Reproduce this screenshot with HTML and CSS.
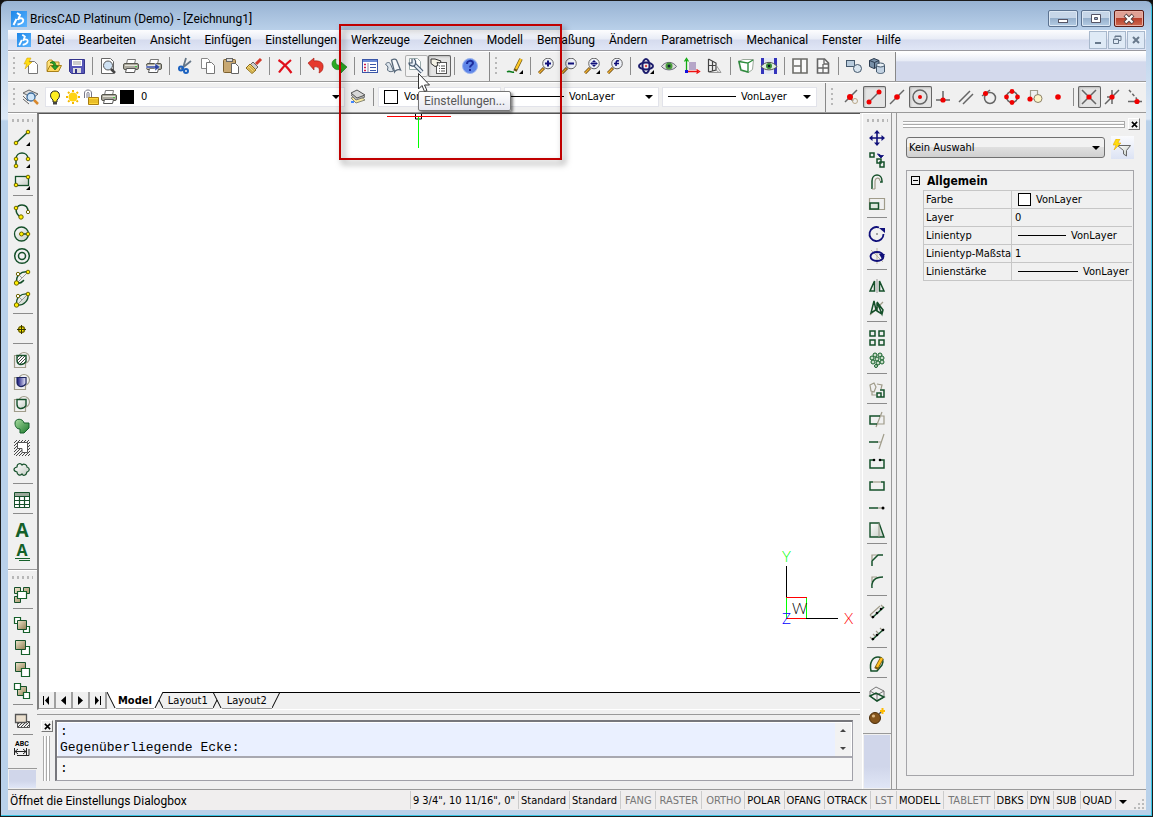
FILE: index.html
```html
<!DOCTYPE html>
<html lang="de">
<head>
    <meta charset="UTF-8">
    <meta name="viewport" content="width=device-width, initial-scale=1.0">
    <title>BricsCAD Platinum (Demo) - [Zeichnung1]</title>
    <link rel="stylesheet" href="styles.css">
</head>
<body>
    <!-- shared icon parts -->
    <svg class="defs" width="0" height="0">
        <defs>
            <linearGradient id="beige" x2="1" y2="1"><stop offset="0" stop-color="#efe6cc"/><stop offset="1" stop-color="#8d7c50"/></linearGradient>
            <linearGradient id="pale" x2="1" y2="1"><stop offset="0" stop-color="#fff"/><stop offset="1" stop-color="#c4ccc4"/></linearGradient>
            <linearGradient id="leaf" x2="1" y2="1"><stop offset="0" stop-color="#a8dca0"/><stop offset="1" stop-color="#1c7a2c"/></linearGradient>
            <linearGradient id="navy" x2="1"><stop offset="0" stop-color="#10107a"/><stop offset="1" stop-color="#f0f0ff"/></linearGradient>
            <linearGradient id="brand" x2="1" y2="1"><stop offset="0" stop-color="#1c86e8"/><stop offset="1" stop-color="#5cb4ff"/></linearGradient>
            <pattern id="hatch" width="3" height="3" patternUnits="userSpaceOnUse"><path d="M0 3L3 0" stroke="#333" stroke-width=".9"/></pattern>
        </defs>
        <symbol id="logo" viewBox="0 0 16 16">
            <rect width="16" height="16" fill="url(#brand)"/>
            <path d="M6 2l3 2-2 5M2.500 14l3-6M8 7.500c3-1 5 .5 4 3-.8 2-2.500 2.500-5.500 3" fill="none" stroke="#fff" stroke-width="2"/>
        </symbol>
        <symbol id="printer" viewBox="0 0 16 16">
            <path d="M3.500 6L4.500 1.500h8L11.500 6" fill="#fff" stroke="#777"/>
            <rect x=".5" y="5.500" width="15" height="6" rx="1.500" fill="#aaa89c" stroke="#55554c"/>
            <path d="M2 7.500h12" stroke="#e4e2d8"/>
            <path d="M3.500 10.500h9l-1 4h-9z" fill="#fff" stroke="#555"/>
            <rect x="12" y="8" width="2" height="1" fill="#4c4"/>
        </symbol>
        <symbol id="lens" viewBox="0 0 16 16">
            <path d="M1 15l5-5" stroke="#6c4a10" stroke-width="3"/>
            <path d="M1 15l4.500-4.500" stroke="#f0b030" stroke-width="1.500"/>
            <circle cx="10" cy="5.500" r="5.300" fill="#eef1f8" stroke="#666"/>
        </symbol>
        <symbol id="flyout" viewBox="0 0 16 16"><path d="M16 12v4h-4z" fill="#000"/></symbol>
        <symbol id="arrow" viewBox="0 0 8 4"><path d="M0 0h8L4 4z" fill="#000"/></symbol>
        <symbol id="cross" viewBox="0 0 8 8"><path d="M1 1l6 6M7 1L1 7" stroke="#000" stroke-width="1.800"/></symbol>
    </svg>

    <div class="window">
        <header class="titlebar">
            <svg class="app-logo" width="16" height="16"><use href="#logo"/></svg>
            <h1>BricsCAD Platinum (Demo) - [Zeichnung1]</h1>
            <div class="window-buttons">
                <button aria-label="Minimieren"><svg width="12" height="12" viewBox="0 0 12 12"><rect x="1.500" y="6.500" width="9" height="3" fill="#fff" stroke="#556"/></svg></button>
                <button aria-label="Maximieren"><svg width="12" height="12" viewBox="0 0 12 12"><path d="M1.500 1.500h9v8h-9zM4.500 4.500v2h3v-2z" fill="#fff" fill-rule="evenodd" stroke="#556"/></svg></button>
                <button class="close" aria-label="Schließen"><svg width="12" height="12" viewBox="0 0 12 12"><path d="M2 2l8 8M10 2l-8 8" stroke="#544" stroke-width="4"/><path d="M2.500 2.500l7 7M9.500 2.500l-7 7" stroke="#fff" stroke-width="2.200"/></svg></button>
            </div>
        </header>

        <nav class="menubar">
            <svg class="doc-logo" width="14" height="16"><use href="#logo"/></svg>
            <button>Datei</button>
            <button>Bearbeiten</button>
            <button>Ansicht</button>
            <button>Einfügen</button>
            <button>Einstellungen</button>
            <button>Werkzeuge</button>
            <button>Zeichnen</button>
            <button>Modell</button>
            <button>Bemaßung</button>
            <button>Ändern</button>
            <button>Parametrisch</button>
            <button>Mechanical</button>
            <button>Fenster</button>
            <button>Hilfe</button>
            <div class="doc-buttons">
                <button aria-label="Zeichnung minimieren"><svg width="10" height="10" viewBox="0 0 10 10"><path d="M2 8h6" stroke="#68798c" stroke-width="2"/></svg></button>
                <button aria-label="Zeichnung wiederherstellen"><svg width="10" height="10" viewBox="0 0 10 10"><path d="M3 3V1h6v4.500H7M3 1.500h6M1.500 4h5v4.500h-5zM1.500 4.500h5" fill="none" stroke="#68798c"/></svg></button>
                <button aria-label="Zeichnung schließen"><svg width="10" height="10" viewBox="0 0 10 10"><path d="M2 2l6 6M8 2L2 8" stroke="#68798c" stroke-width="2"/></svg></button>
            </div>
        </nav>

        <div class="toolbar-row">
            <div class="band">
                <span class="grip"></span>
                <button class="tool" aria-label="Neu"><svg viewBox="0 0 16 16"><path d="M5.500 3.500h6l3 3v9h-9z" fill="#fff" stroke="#777"/><path d="M4 0h4L6 4h3L2 11l1.500-5H1z" fill="#fd1" stroke="#c90" stroke-width=".5"/></svg></button>
                <button class="tool" aria-label="Öffnen"><svg viewBox="0 0 16 16"><path d="M1 13V4l2-2h3l1 2h6v3" fill="#ffe27a" stroke="#b8902a"/><path d="M1 13.500L4 7.500h11.500l-3 6z" fill="#ffd75e" stroke="#a8801a"/><path d="M4 5c3-3 6-1 6 3h2.500L9 12 5.500 8H8C8 6 6 4.500 4 5z" fill="#2aa02a" stroke="#0a600a" stroke-width=".6"/></svg></button>
                <button class="tool" aria-label="Speichern"><svg viewBox="0 0 16 16"><path d="M.5 1.500h15v14h-13l-2-2z" fill="#5757b8" stroke="#34348c"/><path d="M3 2h10v6H3z" fill="#fff"/><path d="M4 4h8M4 6h8" stroke="#999"/><path d="M4 10h8v5H4z" fill="#ddd"/><path d="M6 11h2v4H6z" fill="#34348c"/></svg></button>
                <span class="sep"></span>
                <button class="tool" aria-label="Druckvorschau"><svg viewBox="0 0 16 16"><path d="M1.500.5h9l3 3v12h-12z" fill="#fff" stroke="#666"/><circle cx="8" cy="7.500" r="4.500" fill="#cfe2f4" stroke="#555"/><path d="M11 11l4 4" stroke="#444" stroke-width="2.500"/></svg></button>
                <button class="tool" aria-label="Drucken"><svg><use href="#printer"/></svg></button>
                <button class="tool" aria-label="Publizieren"><svg viewBox="0 0 16 16"><use href="#printer"/><path d="M0 8h9V5l5 4-5 4v-3H0z" fill="#2c44a4" stroke="#fff" stroke-width=".5"/></svg></button>
                <span class="sep"></span>
                <button class="tool" aria-label="Ausschneiden"><svg viewBox="0 0 16 16"><path d="M9 0L6 10M14 3L4 11" stroke="#678" stroke-width="1.800"/><g fill="none" stroke="#1c62c0" stroke-width="2"><circle cx="4" cy="10.500" r="2"/><circle cx="9" cy="13" r="2"/></g></svg></button>
                <button class="tool" aria-label="Kopieren"><svg viewBox="0 0 16 16"><path d="M1.500.5h6l2 2v8h-8z" fill="#fff" stroke="#888"/><path d="M6.500 4.500h5l3 3v8h-8z" fill="#fff" stroke="#777"/></svg></button>
                <button class="tool" aria-label="Einfügen"><svg viewBox="0 0 16 16"><rect x=".5" y="1.500" width="12" height="13" rx="1" fill="#c8a872" stroke="#7c602e"/><rect x="3.500" y=".5" width="6" height="3" fill="#ddd" stroke="#666"/><path d="M8.500 5.500h4l3 3v7h-7z" fill="#fff" stroke="#666"/></svg></button>
                <button class="tool" aria-label="Eigenschaften übertragen"><svg viewBox="0 0 16 16"><path d="M15 1l-5 5" stroke="#d23a2a" stroke-width="3"/><path d="M7 4l5 5-3 3-5-5z" fill="#ccc" stroke="#666"/><path d="M4 6l6 6-4 3.500L0 10z" fill="#f6d66e" stroke="#8a6a1a"/><path d="M2 9.500l5 5M3.500 8l5 5" stroke="#8a6a1a" stroke-width=".7"/></svg></button>
                <span class="sep"></span>
                <button class="tool" aria-label="Löschen"><svg viewBox="0 0 16 16"><path d="M1.500 2C6 5 11 10 14.500 15M14 2C9 6 5 10 2 14.500" fill="none" stroke="#e0101c" stroke-width="2.200"/></svg></button>
                <span class="sep"></span>
                <button class="tool" aria-label="Rückgängig"><svg viewBox="0 0 16 16"><path d="M0 5l6-5v3c6-1 10 2 9 7-.5 3-2 4-4 5 1-4 0-7-5-6v3z" fill="#e63a2e" stroke="#a01810" stroke-width=".6"/></svg></button>
                <button class="tool" aria-label="Wiederherstellen"><svg viewBox="0 0 16 16"><path d="M5 1C1 2 0 6 2 9c2 3 5 3 8 2v4l6-6-6-5v3C6 8 4 6 5 1z" fill="#2cac24" stroke="#0c7010" stroke-width=".6"/></svg></button>
                <span class="sep"></span>
                <button class="tool" aria-label="Eigenschaften"><svg viewBox="0 0 16 16"><rect x=".5" y="1.500" width="15" height="13" fill="#fff" stroke="#3a56a8"/><path d="M1 3h14" stroke="#6c8cd8" stroke-width="2"/><path d="M2 6.500h2M2 9.500h2M2 12.500h2" stroke="#d02050" stroke-width="1.500"/><path d="M6 5v9" stroke="#88a"/><path d="M8 6.500h6M8 9.500h6M8 12.500h6" stroke="#3a56a8"/></svg></button>
                <button class="tool" aria-label="Zeichnungsexplorer"><svg viewBox="0 0 16 16"><path d="M.5 6c2-2 4-2 5 0l3 7c-2 1-5 1-6-1L3 9z" fill="#dde5ec" stroke="#57687a"/><path d="M6.500 2c2-1 4-1 5 0l4 10c-2-1-5 0-6 2z" fill="#f6f8fa" stroke="#57687a" stroke-width="1.300"/></svg></button>
                <button class="tool hover" aria-label="Einstellungen"><svg viewBox="0 0 16 16"><path d="M1.500.5h8l3 3v8h-11z" fill="#fff" stroke="#9aa"/><path d="M6 6l8 8" stroke="#46586e" stroke-width="4"/><path d="M5 5l9 9" stroke="#e6edf6" stroke-width="2"/><path d="M4 1v4H1c0 3 5 4 6 2s1-5-1-6" fill="#e6edf6" stroke="#46586e" stroke-width="1.200"/></svg></button>
                <button class="tool pressed" aria-label="Eigenschaftsleiste"><svg viewBox="0 0 16 16"><rect x="5.500" y="4.500" width="10" height="11" fill="#fff" stroke="#555"/><path d="M8 8h1M8 10.500h1M8 13h1M10 8h4M10 10.500h4M10 13h4" stroke="#555"/><path d="M0 1h4l6 2-1 2-3-.5 1 3-3 1-4-3z" fill="#f4f2e6" stroke="#333"/></svg></button>
                <span class="sep"></span>
                <button class="tool" aria-label="Hilfe"><svg viewBox="0 0 16 16"><circle cx="8" cy="8" r="7.500" fill="#5f86e8" stroke="#9db6ee"/><path d="M5 6c0-4 6-4 6-1 0 2-3 2-3 4.500M8 11v2" fill="none" stroke="#1c2c9c" stroke-width="2"/></svg></button>
            </div>
            <div class="band">
                <span class="grip"></span>
                <button class="tool" aria-label="Skizze"><svg viewBox="0 0 16 16"><path d="M0 14c3-2 4 1 7 0" fill="none" stroke="#0a7a1a" stroke-width="1.500"/><path d="M14 1L8 13" stroke="#6b5414" stroke-width="3.600"/><path d="M14 1L9 11" stroke="#ffc928" stroke-width="2.200"/><use href="#flyout"/></svg></button>
                <span class="sep"></span>
                <button class="tool" aria-label="Vergrößern"><svg viewBox="0 0 16 16"><use href="#lens"/><path d="M7 5.500h6M10 2.500v6" stroke="#10107a" stroke-width="2"/></svg></button>
                <button class="tool" aria-label="Verkleinern"><svg viewBox="0 0 16 16"><use href="#lens"/><path d="M7 5.500h6" stroke="#10107a" stroke-width="2"/></svg></button>
                <button class="tool" aria-label="Zoom Grenzen"><svg viewBox="0 0 16 16"><use href="#lens"/><path d="M6.500 5.500h7M10 2v7M8.500 3.500h3M8.500 7.500h3M8 4v3M12 4v3" stroke="#10107a"/><use href="#flyout"/></svg></button>
                <button class="tool" aria-label="Zoom Vorher"><svg viewBox="0 0 16 16"><use href="#lens"/><path d="M12 3c-3-1-3 1-3 5M7 5.500h5" fill="none" stroke="#10107a" stroke-width="1.600"/></svg></button>
                <span class="sep"></span>
                <button class="tool" aria-label="Orbit"><svg viewBox="0 0 16 16"><g fill="none" stroke="#1c1c6c" stroke-width="2"><ellipse cx="8" cy="8" rx="7" ry="3.500"/><ellipse cx="8" cy="8" rx="3.500" ry="7"/></g><circle cx="8" cy="8" r="1.200" fill="#d44"/><use href="#flyout"/></svg></button>
                <button class="tool" aria-label="Ansicht"><svg viewBox="0 0 16 16"><path d="M.5 8.500C4 3 12 3 15.500 8.500 12 13 4 13 .5 8.500z" fill="#ddd" stroke="#667"/><circle cx="8" cy="8" r="3.500" fill="#4a9c3c"/><circle cx="8" cy="8" r="1.500" fill="#123"/></svg></button>
                <button class="tool" aria-label="BKS"><svg viewBox="0 0 16 16"><path d="M5 4h7v8H5z" fill="#b6a6c8"/><path d="M2.500 13V2M.5 3.500l2-3 2 3" fill="none" stroke="#1a1" stroke-width="1.300"/><path d="M3 13.500h11M12.500 11.500l3 2-3 2" fill="none" stroke="#e11" stroke-width="1.300"/><path d="M1 12h3v3H1z" fill="#11d"/></svg></button>
                <button class="tool" aria-label="Perspektive"><svg viewBox="0 0 16 16"><path d="M1.500 1v13M1.500 1L9 5v7l-7.500 2M5.500 3v10M1.500 7.500H9" fill="none" stroke="#444" stroke-width="1.200"/><path d="M9 7l5 7.500H2M9 12l3 2.500" fill="none" stroke="#999"/></svg></button>
                <span class="sep"></span>
                <button class="tool" aria-label="Ansichtsfläche"><svg viewBox="0 0 16 16"><path d="M.5 3.500L5 1.500h10.500l-1 10-4 3-8-2z" fill="#fff" stroke="#9aa89a"/><path d="M1 3.500l9 1.500v9l-7-2zM10 5l5-3" fill="none" stroke="#2c8c3c" stroke-width="1.400"/></svg></button>
                <button class="tool" aria-label="Rendern"><svg viewBox="0 0 16 16"><path d="M0 0h16v16H0z" fill="#3434bc"/><path d="M3 0h10v16H3z" fill="#e4e8f4"/><path d="M0 8.500C4 3 12 3 16 8.500 12 13 4 13 0 8.500z" fill="#ded" stroke="#555"/><circle cx="8" cy="8" r="3" fill="#3a8c34"/><circle cx="8" cy="8" r="1.200" fill="#012"/></svg></button>
                <span class="sep"></span>
                <button class="tool" aria-label="Ansichtsfenster"><svg viewBox="0 0 16 16"><path d="M1 1h14v14H1zM9 1v14M2 8h7" fill="#fafafa" stroke="#6c6c68" stroke-width="1.600"/></svg></button>
                <button class="tool" aria-label="Layout"><svg viewBox="0 0 16 16"><path d="M2.500 1h7l4 4v10h-11z" fill="#fafafa" stroke="#666" stroke-width="1.600"/><path d="M9 1v5h4M3 10h10M8 6v9" fill="none" stroke="#666" stroke-width="1.300"/></svg></button>
                <span class="sep"></span>
                <button class="tool" aria-label="2D-Objekte"><svg viewBox="0 0 16 16"><rect x=".5" y="2.500" width="8" height="6" fill="#b8cbdc" stroke="#44586c"/><circle cx="11.500" cy="10.500" r="4" fill="#d8e4ee" stroke="#44586c"/></svg></button>
                <button class="tool" aria-label="3D-Objekte"><svg viewBox="0 0 16 16"><path d="M.5 2.500L5 .5l5 2v6l-5 2-4.500-2z" fill="#7890a8" stroke="#2c3c50"/><path d="M.5 2.500l5 2 4.500-2M5.500 4.500v6" fill="none" stroke="#2c3c50"/><path d="M7.500 7v7c2 2 6 2 8 0V7" fill="#c2d2e2" stroke="#44586c"/><ellipse cx="11.500" cy="7" rx="4" ry="2" fill="#e8f0f6" stroke="#44586c"/></svg></button>
            </div>
        </div>

        <div class="toolbar-row layers">
            <div class="band">
                <span class="grip"></span>
                <button class="tool" aria-label="Layer-Explorer"><svg viewBox="0 0 16 16"><path d="M0 4l6-3 9 4-5 4zM0 7l5 5M0 10l6 5" fill="#ddd" stroke="#666"/><circle cx="8" cy="8" r="4" fill="#cfe6fa" stroke="#3c6c9c" stroke-width="1.300"/><path d="M11 11l4 4" stroke="#d8882c" stroke-width="2.500"/></svg></button>
                <div class="combo layer">
                    <svg viewBox="0 0 16 16"><path d="M6 11C2 8 3 2 8 2s6 6 2 9v2H6z" fill="#ffee20" stroke="#222"/><path d="M6 13h4v2.500H6z" fill="#444"/></svg>
                    <svg viewBox="0 0 16 16"><path d="M8 1v14M1 8h14M3 3l10 10M13 3L3 13" stroke="#f4b800" stroke-width="2" stroke-dasharray="2 1"/><circle cx="8" cy="8" r="4.500" fill="#ffd414"/></svg>
                    <svg viewBox="0 0 16 16"><path d="M1.500 9V4c0-4 7-4 7 0v5M4 9V4.500c0-1.500 2-1.500 2 0V8" fill="none" stroke="#778"/><path d="M5.500 8.500h10v7h-10z" fill="#ffd83a" stroke="#a87c10"/><path d="M6 11h9M6 13h9" stroke="#d4a418"/></svg>
                    <svg><use href="#printer"/></svg>
                    <span class="swatch black"></span>
                    <select aria-label="Layer"><option>0</option></select>
                    <svg class="drop"><use href="#arrow"/></svg>
                </div>
                <button class="tool" aria-label="Layerstatus"><svg viewBox="0 0 16 16"><path d="M1 9l5 5 9-3-5-4z" fill="#f8e8a0" stroke="#887"/><path d="M1 6l5 5 9-3-5-5z" fill="#bbb" stroke="#777"/><path d="M1 4l6-3 8 5-8 3z" fill="#d8d8d8" stroke="#555"/><path d="M1 13h3" stroke="#48f" stroke-width="2"/></svg></button>
                <span class="sep"></span>
                <div class="combo color">
                    <span class="swatch"></span>
                    <select aria-label="Farbe"><option>VonLayer</option></select>
                    <svg class="drop"><use href="#arrow"/></svg>
                </div>
                <div class="combo linetype">
                    <span class="sample"></span>
                    <select aria-label="Linientyp"><option>VonLayer</option></select>
                    <svg class="drop"><use href="#arrow"/></svg>
                </div>
                <div class="combo linetype">
                    <span class="sample long"></span>
                    <select aria-label="Linienstärke"><option>VonLayer</option></select>
                    <svg class="drop"><use href="#arrow"/></svg>
                </div>
            </div>
            <div class="band snaps">
                <span class="grip"></span>
                <button class="tool" aria-label="Nächster Punkt"><svg viewBox="0 0 16 16"><path class="k" d="M2 13L14 1M5 7l5 5"/><circle cx="12" cy="12" r="2.500" fill="none" stroke="#b8a888"/><circle class="dot" cx="7" cy="8" r="3"/></svg></button>
                <button class="tool pressed" aria-label="Endpunkt"><svg viewBox="0 0 16 16"><path class="k" d="M3 13L13 3"/><circle class="dot" cx="3" cy="13" r="2.500"/><circle class="dot" cx="13" cy="3" r="2.500"/></svg></button>
                <button class="tool" aria-label="Mittelpunkt"><svg viewBox="0 0 16 16"><path class="k" d="M1 15L15 1"/><circle class="dot" cx="8" cy="8" r="2.800"/></svg></button>
                <button class="tool pressed" aria-label="Zentrum"><svg viewBox="0 0 16 16"><circle class="k" cx="8" cy="8" r="7"/><circle class="dot" cx="8" cy="8" r="2"/></svg></button>
                <button class="tool" aria-label="Lotrecht"><svg viewBox="0 0 16 16"><path class="k" d="M1 11h14M8 2v9"/><circle class="dot" cx="8" cy="11" r="2.600"/></svg></button>
                <button class="tool" aria-label="Parallel"><svg viewBox="0 0 16 16"><path class="k" d="M1 13L12 2M5 15L15 5"/></svg></button>
                <button class="tool" aria-label="Tangente"><svg viewBox="0 0 16 16"><circle class="k" cx="9" cy="9" r="5.500"/><path class="k" d="M1 7l8-6"/><circle class="dot" cx="4.500" cy="4.500" r="2.500"/></svg></button>
                <button class="tool" aria-label="Quadrant"><svg viewBox="0 0 16 16"><circle class="k" cx="8" cy="8" r="5.500"/><circle class="dot" cx="8" cy="2.500" r="2.400"/><circle class="dot" cx="2.500" cy="8" r="2.400"/><circle class="dot" cx="13.500" cy="8" r="2.400"/><circle class="dot" cx="8" cy="13.500" r="2.400"/></svg></button>
                <button class="tool" aria-label="Basispunkt"><svg viewBox="0 0 16 16"><path class="s" d="M3.500 10V1.500h7V10z"/><circle cx="11" cy="9.500" r="4" fill="#fdf5c8" stroke="#8a8068"/><circle class="dot" cx="3" cy="10" r="2.600"/></svg></button>
                <button class="tool" aria-label="Punkt"><svg viewBox="0 0 16 16"><circle class="dot" cx="8" cy="8" r="2.800"/></svg></button>
                <span class="sep"></span>
                <button class="tool pressed" aria-label="Schnittpunkt"><svg viewBox="0 0 16 16"><path class="k" d="M1 1l14 14M15 1L1 15"/><circle class="dot" cx="8" cy="8" r="2.600"/></svg></button>
                <button class="tool" aria-label="Scheinbarer Schnittpunkt"><svg viewBox="0 0 16 16"><path class="k" d="M1 15L15 1M8 1v14M3 8h7"/><circle class="dot" cx="8" cy="8" r="2.600"/></svg></button>
                <button class="tool" aria-label="Verlängerung"><svg viewBox="0 0 16 16"><path class="k" d="M1 12.500h14"/><path class="k" d="M2 1l8 9" stroke-dasharray="3 2"/><circle class="dot" cx="10" cy="12.500" r="2.600"/></svg></button>
            </div>
        </div>

        <main class="workspace">
            <aside class="side left">
                <div class="dock">
                    <span class="grip"></span>
                    <button class="tool" aria-label="Linie"><svg viewBox="0 0 16 16"><path class="g" d="M2 13L14 2"/><circle class="node" cx="2" cy="13" r="1.800"/><circle class="node" cx="14" cy="2" r="1.800"/><use href="#flyout"/></svg></button>
                    <button class="tool" aria-label="Polylinie"><svg viewBox="0 0 16 16"><path class="g" d="M2 14V7c0-8 12-8 12 0"/><circle class="node" cx="2" cy="14" r="1.800"/><circle class="node" cx="2" cy="7" r="1.800"/><circle class="node" cx="14" cy="7" r="1.800"/><use href="#flyout"/></svg></button>
                    <button class="tool" aria-label="Rechteck"><svg viewBox="0 0 16 16"><rect x="1.500" y="2.500" width="13" height="9" fill="url(#pale)" stroke="#15502a" stroke-width="1.300"/><circle class="node" cx="2" cy="11" r="1.800"/><circle class="node" cx="14" cy="3" r="1.800"/><use href="#flyout"/></svg></button>
                    <span class="sep"></span>
                    <button class="tool" aria-label="Bogen"><svg viewBox="0 0 16 16"><path class="g" d="M6 13C-1 7 3 1 8 1c4 0 6 3 6 7"/><circle class="node" cx="2" cy="4" r="1.800"/><circle class="node" cx="7" cy="13" r="2.200"/><circle class="node empty" cx="14" cy="8" r="1.700"/></svg></button>
                    <button class="tool" aria-label="Kreis"><svg viewBox="0 0 16 16"><circle cx="7.500" cy="8" r="7" fill="url(#pale)" stroke="#15502a" stroke-width="1.300"/><path class="g" d="M8 8h6"/><circle class="node" cx="7.500" cy="8" r="2"/><circle class="node" cx="14" cy="8" r="1.800"/></svg></button>
                    <button class="tool" aria-label="Ring"><svg viewBox="0 0 16 16"><circle class="g" cx="8" cy="8" r="7.300"/><circle class="g" cx="8" cy="8" r="3.500"/></svg></button>
                    <button class="tool" aria-label="Elliptischer Bogen"><svg viewBox="0 0 16 16"><path class="g" d="M3 13C1 6 7 1 14 2M3 13c4 1 5-1 7-3"/><path d="M4 4l4 4M3 13L14 2" stroke="#999"/><circle class="node" cx="2.500" cy="13" r="2.200"/><circle class="node" cx="14" cy="2" r="1.800"/><circle class="node empty" cx="4" cy="4" r="1.700"/></svg></button>
                    <button class="tool" aria-label="Ellipse"><svg viewBox="0 0 16 16"><path d="M3 13C1 6 7 1 14 2c1 6-4 12-11 11z" fill="url(#pale)" stroke="#15502a" stroke-width="1.300"/><path d="M4 4l4 4M3 13L14 2" stroke="#999"/><circle class="node" cx="2.500" cy="13" r="2.200"/><circle class="node" cx="14" cy="2" r="1.800"/><circle class="node empty" cx="4" cy="4" r="1.700"/></svg></button>
                    <span class="sep"></span>
                    <button class="tool" aria-label="Punkt"><svg viewBox="0 0 16 16"><circle cx="7.500" cy="7.500" r="3" fill="#ffee00" stroke="#776c00" stroke-width="1.500"/><path d="M7.500 3v9M3 7.500h9" stroke="#363600"/></svg></button>
                    <span class="sep"></span>
                    <button class="tool" aria-label="Schraffur"><svg viewBox="0 0 16 16"><path class="s" d="M.5 3.500h11v12H.5z"/><circle class="s" cx="10" cy="6" r="5.500"/><path d="M3 3.500h9v6q-2 3.500-6 3-3-1-3-4z" fill="#fff"/><path d="M3 3.500h9v6q-2 3.500-6 3-3-1-3-4z" fill="url(#hatch)" stroke="#15502a" stroke-width="1.400"/></svg></button>
                    <button class="tool" aria-label="Farbverlauf"><svg viewBox="0 0 16 16"><path class="s" d="M.5 3.500h11v12H.5z"/><circle class="s" cx="10" cy="6" r="5.500"/><path d="M3 3.500h9v6q-2 3.500-6 3-3-1-3-4z" fill="url(#navy)" stroke="#1c2460" stroke-width="1.200"/></svg></button>
                    <button class="tool" aria-label="Umgrenzung"><svg viewBox="0 0 16 16"><path class="s" d="M.5 3.500h11v12H.5z"/><circle class="s" cx="10" cy="6" r="5.500"/><path d="M3 3.500h9v6q-2 3.500-6 3-3-1-3-4z" fill="url(#pale)" stroke="#15502a" stroke-width="1.400"/></svg></button>
                    <button class="tool" aria-label="Region"><svg viewBox="0 0 16 16"><path d="M1 5c0-5 8-5 9 0h5v5l-5 5H6v-4C3 11 1 9 1 5z" fill="url(#leaf)" stroke="#15602a"/></svg></button>
                    <button class="tool" aria-label="Abdecken"><svg viewBox="0 0 16 16"><path d="M0 0h16v16H0z" fill="url(#hatch)"/><path d="M3.500 2.500h10v10H8V8.500H3.500z" fill="#fff" stroke="#555"/></svg></button>
                    <button class="tool" aria-label="Revisionswolke"><svg viewBox="0 0 16 16"><path d="M3 5c0-4 4-4 5-2 2-2 5 0 5 2 3 1 3 4 0 5-1 4-4 4-5 2-2 2-5 1-5-2-4-1-4-4 0-5z" fill="url(#pale)" stroke="#15502a" stroke-width="1.200"/></svg></button>
                    <span class="sep"></span>
                    <button class="tool" aria-label="Tabelle"><svg viewBox="0 0 16 16"><path d="M.5.5h15v15H.5z" fill="#fff" stroke="#15502a"/><path d="M1 1h14v3H1z" fill="#9aa89a"/><path d="M0 4.500h16M0 8.500h16M0 12.500h16M5.500 4v12M10.500 4v12" stroke="#15502a" stroke-width="1.200"/></svg></button>
                    <span class="sep"></span>
                    <button class="tool letter" aria-label="Text">A</button>
                    <button class="tool letter lined" aria-label="Absatztext">A</button>
                </div>
                <div class="dock">
                    <span class="grip"></span>
                    <button class="tool" aria-label="Gruppe"><svg viewBox="0 0 16 16"><path class="bx" d="M.5.5h6v6h-6zM9.500.5h6v6h-6zM.5 9.500h6v6h-6z"/><path class="wx" d="M3.500 4.500h9v7h-9z"/></svg></button>
                    <span class="sep"></span>
                    <button class="tool" aria-label="Nach vorne"><svg viewBox="0 0 16 16"><path class="wx" d="M.5.500h6v6h-6zM9.500 9.500h6v6h-6z"/><path class="bx" d="M3.500 3.500h9v9h-9z"/></svg></button>
                    <button class="tool" aria-label="Über Objekt"><svg viewBox="0 0 16 16"><path class="wx" d="M7.500 7.500h8v8h-8z"/><path class="bx" d="M1.500 1.500h10v9h-10z"/></svg></button>
                    <button class="tool" aria-label="Unter Objekt"><svg viewBox="0 0 16 16"><path class="bx" d="M1.500 1.500h10v9h-10z"/><path class="wx" d="M7.500 7.500h8v8h-8z"/></svg></button>
                    <button class="tool" aria-label="Nach hinten"><svg viewBox="0 0 16 16"><path class="bx" d="M3.500 3.500h9v9h-9z"/><path class="wx" d="M.5.500h6v6h-6zM9.500 9.500h6v6h-6z"/></svg></button>
                    <span class="sep"></span>
                    <button class="tool" aria-label="Schraffur nach hinten"><svg viewBox="0 0 16 16"><path d="M3.500 8.500h12v6h-12z" fill="url(#hatch)" stroke="#555"/><path d="M1.500 1.500h11v8h-11z" fill="#eadfce" stroke="#555" stroke-width="1.300"/></svg></button>
                    <span class="sep"></span>
                    <button class="tool abc" aria-label="Beschriftung nach vorne">ABC<svg viewBox="0 0 16 8"><path d="M.5 0v7M12.500 0v7M1 3.500h11M4 1L1 3.500 4 6M9 1l3 2.500L9 6M3 7.500h12V1" fill="none" stroke="#222"/></svg></button>
                </div>
                <div class="dock-rest"></div>
            </aside>

            <section class="center">
                <div class="canvas">
                    <svg class="crosshair" width="64" height="34" viewBox="0 0 64 34"><path d="M28.500 0v5h6V0" fill="none" stroke="#000"/><path d="M0 2.500h64" stroke="#f00"/><path d="M31.500 3v31" stroke="#0f0"/></svg>
                    <svg class="ucs" width="80" height="80" viewBox="0 0 80 80">
                        <path d="M8.500 18v50M8 70.500h52" stroke="#000"/>
                        <path d="M8.500 50v20M28.500 50v20" stroke="#0f0"/>
                        <path d="M8 49.500h21M8 70.500h20" stroke="#f00"/>
                        <text x="4" y="14" fill="#0f0">Y</text>
                        <text x="66" y="76" fill="#f00">X</text>
                        <text x="14" y="66" fill="#000">W</text>
                        <text x="4" y="76" fill="#00f">Z</text>
                    </svg>
                </div>
                <div class="tabs">
                    <button class="nav" aria-label="Erstes Layout"><svg viewBox="0 0 9 9"><path d="M1 0h1v9H1zM7 0v9L3 4.500z"/></svg></button>
                    <button class="nav" aria-label="Voriges Layout"><svg viewBox="0 0 9 9"><path d="M7 0v9L2 4.500z"/></svg></button>
                    <button class="nav" aria-label="Nächstes Layout"><svg viewBox="0 0 9 9"><path d="M2 0v9l5-4.500z"/></svg></button>
                    <button class="nav" aria-label="Letztes Layout"><svg viewBox="0 0 9 9"><path d="M7 0h1v9H7zM2 0v9l4-4.500z"/></svg></button>
                    <svg class="slant" viewBox="0 0 9 17"><path class="paper" d="M0 0h9v17z"/><path d="M0 0l8 16"/></svg>
                    <button class="tab active">Model</button>
                    <svg class="slant" viewBox="0 0 9 17"><path class="paper" d="M0 0h9L1 17H0z"/><path d="M9 0L1 16M5 8l4 8"/></svg>
                    <button class="tab">Layout1</button>
                    <svg class="slant" viewBox="0 0 9 17"><path d="M0 .5h9M0 0l8 16M4 8L0 16"/></svg>
                    <button class="tab">Layout2</button>
                    <svg class="slant" viewBox="0 0 9 17"><path d="M0 .5h9M8 0L0 16"/></svg>
                    <span class="tab-rest"></span>
                </div>
                <div class="command">
                    <div class="command-side">
                        <button class="mini-close" aria-label="Befehlszeile schließen"><svg><use href="#cross"/></svg></button>
                        <span class="vgrip"></span>
                    </div>
                    <div class="console">
                        <div class="history">
                            <div class="lines"><p>:</p><p>Gegenüberliegende Ecke:</p></div>
                            <div class="scroll">
                                <svg viewBox="0 0 8 4"><path d="M0 4h8L4 0z"/></svg>
                                <svg viewBox="0 0 8 4"><path d="M0 0h8L4 4z"/></svg>
                            </div>
                        </div>
                        <input type="text" value=":" aria-label="Befehl">
                    </div>
                </div>
            </section>

            <aside class="side right">
                <div class="dock">
                    <span class="grip"></span>
                    <button class="tool" aria-label="Verschieben"><svg viewBox="0 0 16 16"><path d="M8 1v14M1 8h14" stroke="#10107a" stroke-width="1.600"/><path d="M8 0l3 3.500H5zM8 16l3-3.500H5zM0 8l3.500-3v6zM16 8l-3.500-3v6z" fill="#10107a"/></svg></button>
                    <button class="tool" aria-label="Kopieren"><svg viewBox="0 0 16 16"><path class="g" d="M1 1h4v4H1zM8 7h4v4H8zM11 10h4v5h-4z"/><path d="M8 2c3 0 4 1 4 3M9.500 3.500h5L12 6z" fill="#10107a" stroke="#10107a" stroke-width=".8"/></svg></button>
                    <button class="tool" aria-label="Versatz"><svg viewBox="0 0 16 16"><path class="g" d="M3 15V7c0-8 10-8 10 0v1h-2"/><path class="s" d="M6 15V8c0-5 5-5 5-1M3 15h3"/></svg></button>
                    <button class="tool" aria-label="Skalieren"><svg viewBox="0 0 16 16"><path class="s" d="M.5 2.500h15v11H.5z"/><path d="M1 7h8.500v6H1z" fill="#dfe8df" stroke="#15502a" stroke-width="1.500"/></svg></button>
                    <span class="sep"></span>
                    <button class="tool" aria-label="Drehen"><svg viewBox="0 0 16 16"><path d="M10 1.500A7 7 0 1 0 14.500 8" fill="none" stroke="#10107a" stroke-width="1.800"/><path d="M10 2h6v5z" fill="#10107a"/><circle cx="8" cy="8" r="1" fill="#888"/></svg></button>
                    <button class="tool" aria-label="3D Drehen"><svg viewBox="0 0 16 16"><path d="M8 0v16M2 2l12 12" stroke="#bbb5a0"/><ellipse cx="8" cy="8.500" rx="6.500" ry="4.500" fill="none" stroke="#10107a" stroke-width="1.800"/><path d="M10 6h6l-3 5z" fill="#10107a"/></svg></button>
                    <span class="sep"></span>
                    <button class="tool" aria-label="Spiegeln"><svg viewBox="0 0 16 16"><path d="M8 1v14" stroke="#999"/><path class="g" d="M5.500 3v10H1zM10.500 3v10H15z"/></svg></button>
                    <button class="tool" aria-label="3D Spiegeln"><svg viewBox="0 0 16 16"><path class="s" d="M1 15L14 2"/><path class="g" d="M5 1l2 9-5 3zM8 2l6 8-1 4zM8 3v8l5 3"/></svg></button>
                    <span class="sep"></span>
                    <button class="tool" aria-label="Reihe"><svg viewBox="0 0 16 16"><path class="g" d="M1 1h5v5H1zM10 1h5v5h-5zM1 10h5v5H1zM10 10h5v5h-5z"/></svg></button>
                    <button class="tool" aria-label="3D Reihe"><svg viewBox="0 0 16 16"><g fill="#c8dcc8" stroke="#15602a"><circle cx="6" cy="3" r="2"/><circle cx="11" cy="3" r="2"/><circle cx="3" cy="6" r="2"/><circle cx="8" cy="7" r="2"/><circle cx="13" cy="6" r="2"/><circle cx="4" cy="10" r="2"/><circle cx="9" cy="11" r="2"/><circle cx="13" cy="10" r="2"/><circle cx="7" cy="14" r="1.500"/></g></svg></button>
                    <span class="sep"></span>
                    <button class="tool" aria-label="Ausrichten"><svg viewBox="0 0 16 16"><path class="s" d="M1 3l4-2 2 4-2 5-3-1zM8 2l5 1-1 4M3 9v4h4"/><path class="g" d="M8 11h4v4H8zM11 8h4v7h-3"/></svg></button>
                    <span class="sep"></span>
                    <button class="tool" aria-label="Stutzen"><svg viewBox="0 0 16 16"><path class="s" d="M10 4h5v8H8M7 15L13 0"/><path class="g" d="M11 4H1v8h7"/></svg></button>
                    <button class="tool" aria-label="Dehnen"><svg viewBox="0 0 16 16"><path class="s" d="M8 8h4M10 15l5-15"/><path class="g" d="M0 8h9"/></svg></button>
                    <button class="tool" aria-label="Bruch"><svg viewBox="0 0 16 16"><path class="g" d="M5 4H1v8h14V4h-4"/><circle cx="5" cy="4" r="1.300"/><circle cx="11" cy="4" r="1.300"/></svg></button>
                    <button class="tool" aria-label="Verbinden"><svg viewBox="0 0 16 16"><path class="g" d="M4 4H1v8h14V4h-3"/><path class="s" d="M4 4h8"/></svg></button>
                    <button class="tool" aria-label="Länge"><svg viewBox="0 0 16 16"><path class="g" d="M0 8h9"/><path class="s" d="M9 8h5"/><circle cx="14" cy="8" r="1.500"/></svg></button>
                    <button class="tool" aria-label="Strecken"><svg viewBox="0 0 16 16"><path d="M1 1h9l5 14H1z" fill="url(#pale)" stroke="#15502a" stroke-width="1.400"/><path d="M10 1v14" stroke="#9a9a8a"/></svg></button>
                    <span class="sep"></span>
                    <button class="tool" aria-label="Fase"><svg viewBox="0 0 16 16"><path class="s" d="M3 8V3h5"/><path class="g" d="M3 14V9l6-6h5"/></svg></button>
                    <button class="tool" aria-label="Abrunden"><svg viewBox="0 0 16 16"><path class="s" d="M3 8V3h5"/><path class="g" d="M3 14c-1-7 3-11 11-11"/></svg></button>
                    <span class="sep"></span>
                    <button class="tool" aria-label="Teilen"><svg viewBox="0 0 16 16"><path class="s" d="M1 11L11 2M12 1l3 3M1 11l3 3"/><path class="g" d="M3 14L15 3"/><circle cx="4" cy="13" r="1.300"/><circle cx="8" cy="9" r="1.300"/><circle cx="12" cy="5" r="1.300"/></svg></button>
                    <button class="tool" aria-label="Messen"><svg viewBox="0 0 16 16"><path class="s" d="M1 11l3 3M4 8l3 3M7 5l3 3M11 2l3 3"/><path class="g" d="M3 14L15 3"/><circle cx="4" cy="13" r="1.300"/><circle cx="8" cy="9" r="1.300"/><circle cx="14" cy="4" r="1.300"/></svg></button>
                    <span class="sep"></span>
                    <button class="tool" aria-label="Bearbeiten"><svg viewBox="0 0 16 16"><path class="g" d="M2 15C0 6 4 1 9 1c5 0 6 4 4 8L8 15z"/><path d="M13 2L7 13" stroke="#7c5c10" stroke-width="4"/><path d="M13 2L8 11" stroke="#ffc020" stroke-width="2.400"/></svg></button>
                    <span class="sep"></span>
                    <button class="tool" aria-label="Körper bearbeiten"><svg viewBox="0 0 16 16"><path d="M1 5l6-4 8 4v6l-7 4-7-5zM1 5l7 4 7-4M8 9v6" fill="none" stroke="#777"/><path class="g" d="M1 10l6-3 8 4-7 4z"/></svg></button>
                    <button class="tool" aria-label="Ursprung"><svg viewBox="0 0 16 16"><circle cx="6" cy="10" r="5.500" fill="#85551c" stroke="#4a2c08"/><circle cx="4.500" cy="8" r="1.600" fill="#dcb884"/><path d="M10 6l3-3" stroke="#555" stroke-width="1.500"/><path d="M11 3h5M13.500 0v6" stroke="#fb0" stroke-width="2"/></svg></button>
                </div>
                <div class="dock-rest"></div>
            </aside>

            <aside class="properties">
                <div class="panel-grip">
                    <span class="hgrip"></span>
                    <button class="mini-close" aria-label="Eigenschaften schließen"><svg><use href="#cross"/></svg></button>
                </div>
                <div class="selection">
                    <div class="select-wrap">
                        <select aria-label="Auswahl"><option>Kein Auswahl</option></select>
                        <svg class="drop"><use href="#arrow"/></svg>
                    </div>
                    <button class="filter" aria-label="Schnellauswahl"><svg viewBox="0 0 18 18"><path d="M4.500 6.500h13l-4 5V17l-3-2v-3.500z" fill="url(#pale)" stroke="#666"/><path d="M3 0h4L5 4h3L1 11l2-5H0z" fill="#fd1" stroke="#d90" stroke-width=".5"/></svg></button>
                </div>
                <div class="grid">
                    <h2><button class="toggle" aria-label="Einklappen"></button>Allgemein</h2>
                    <table>
                        <tr><th scope="row">Farbe</th><td><span class="value"><span class="swatch small"></span>VonLayer</span></td></tr>
                        <tr><th scope="row">Layer</th><td><span class="value plain">0</span></td></tr>
                        <tr><th scope="row">Linientyp</th><td><span class="value"><span class="line"></span>VonLayer</span></td></tr>
                        <tr><th scope="row">Linientyp-Maßsta</th><td><span class="value plain">1</span></td></tr>
                        <tr><th scope="row">Linienstärke</th><td><span class="value"><span class="line long"></span>VonLayer</span></td></tr>
                    </table>
                </div>
            </aside>
        </main>

        <footer class="statusbar">
            <span class="message">Öffnet die Einstellungs Dialogbox</span>
            <span class="cell">9 3/4", 10 11/16", 0"</span>
            <button class="cell">Standard</button>
            <button class="cell">Standard</button>
            <button class="cell off">FANG</button>
            <button class="cell off">RASTER</button>
            <button class="cell off">ORTHO</button>
            <button class="cell">POLAR</button>
            <button class="cell">OFANG</button>
            <button class="cell">OTRACK</button>
            <button class="cell off">LST</button>
            <button class="cell">MODELL</button>
            <button class="cell off">TABLETT</button>
            <button class="cell">DBKS</button>
            <button class="cell">DYN</button>
            <button class="cell">SUB</button>
            <button class="cell">QUAD</button>
            <button class="cell more" aria-label="Mehr"><svg class="drop"><use href="#arrow"/></svg></button>
            <svg class="resize" viewBox="0 0 10 10"><path d="M8 0h2v2H8zM8 4h2v2H8zM8 8h2v2H8zM4 4h2v2H4zM4 8h2v2H4zM0 8h2v2H0z" fill="#bbb"/></svg>
        </footer>

        <div class="tooltip" role="tooltip">Einstellungen...</div>
        <svg class="pointer" width="12" height="19" viewBox="0 0 12 19"><path d="M.5.5v15.500l3.500-3.500 2.500 6 2.500-1-2.500-5.500h5z" fill="#fff" stroke="#333"/></svg>
        <div class="highlight"></div>
    </div>
</body>
</html>
```
FILE: styles.css
```css
* {
    box-sizing: border-box;
}

body {
    margin: 0;
    background: #111;
    font-family: "DejaVu Sans Condensed", "DejaVu Sans", sans-serif;
    font-size: 11px;
    color: #000;
}

button, select, input {
    font: inherit;
    color: inherit;
    margin: 0;
    padding: 0;
    border: none;
    background: none;
}

select {
    appearance: none;
    flex: 1;
    min-width: 0;
}

h1, h2, p {
    margin: 0;
    font-weight: normal;
}

.defs {
    position: absolute;
}

.window {
    position: relative;
    display: flex;
    flex-direction: column;
    height: 100vh;
    min-height: 600px;
    padding: 1px 6px 6px 7px;
    border: 1px solid #1c1c1c;
    border-radius: 7px 7px 0 0;
    box-shadow: inset -1px -1px 0 #35c4e4;
    background: linear-gradient(#98b3d3, #bad1ea 30px, #dbe8f6 118px, #b9d1ea 120px);
    overflow: hidden;
}

/* title and menu */

.titlebar {
    display: flex;
    align-items: center;
    height: 28px;
    flex: none;
    padding: 5px 2px 0 3px;
}

.titlebar h1 {
    flex: 1;
    margin-left: 3px;
    font: 12px Roboto, sans-serif;
}

.window-buttons {
    display: flex;
    gap: 3px;
}

.window-buttons button {
    display: flex;
    align-items: center;
    justify-content: center;
    width: 30px;
    height: 17px;
    border: 1px solid #5b7290;
    border-radius: 2px;
    box-shadow: inset 0 0 0 1px #dce8f4;
    background: linear-gradient(#c6d6e8 50%, #96b0cc 50%, #b4cce4);
}

.window-buttons .close {
    border-color: #5c1a14;
    box-shadow: inset 0 0 0 1px #e8b0a4;
    background: linear-gradient(#e0a094 45%, #b8402c 50%, #cf6a50);
}

.menubar {
    display: flex;
    align-items: center;
    height: 21px;
    flex: none;
    padding-left: 9px;
    border-bottom: 1px solid #9a9aa0;
    background: linear-gradient(#fdfdfe, #e8ecf6 45%, #d5dbee 50%, #e0e6f6);
    font: 12px Roboto, sans-serif;
}

.menubar > button {
    padding: 0 7px;
}

.doc-logo {
    margin-right: -1px;
}

.doc-buttons {
    display: flex;
    gap: 1px;
    margin-left: auto;
    padding-right: 1px;
}

.doc-buttons button {
    display: flex;
    align-items: center;
    justify-content: center;
    width: 18px;
    height: 18px;
    border: 1px solid #a8b8cc;
    background: #dfeaf6;
}

/* toolbars */

.toolbar-row {
    display: flex;
    height: 31px;
    flex: none;
    border-top: 1px solid #fff;
    border-bottom: 1px solid #9a9a9a;
    background: linear-gradient(#fff, #e8ecf6 30%, #d3d9ec 34%);
    overflow: hidden;
}

.band {
    display: flex;
    align-items: center;
    flex: none;
    padding: 0 7px 2px 5px;
    border-right: 1px solid #888;
    background: #f0f0f0;
}

.band + .band {
    padding: 0 6px 2px 5px;
}

.band + .band .grip {
    margin-right: 6px;
}

.layers .band {
    padding-right: 5px;
}

.band.snaps {
    flex: 1;
    min-width: 0;
    border-right: none;
}

.grip {
    flex: none;
    width: 3px;
    height: 20px;
    margin-right: 4px;
    background: linear-gradient(#b8b8b8, #b8b8b8) 0 1px / 2px 2px no-repeat,
                linear-gradient(#b8b8b8, #b8b8b8) 0 6px / 2px 2px no-repeat,
                linear-gradient(#b8b8b8, #b8b8b8) 0 11px / 2px 2px no-repeat,
                linear-gradient(#b8b8b8, #b8b8b8) 0 16px / 2px 2px no-repeat;
}

.tool {
    display: flex;
    align-items: center;
    flex: none;
    width: 23px;
    height: 22px;
    padding: 0 4px 0 3px;
    border-radius: 2px;
}

.tool svg {
    display: block;
    flex: none;
    width: 16px;
    height: 16px;
    overflow: visible;
}

.tool.hover {
    background: #f4f4f4;
    box-shadow: inset 0 0 0 1px #b0b0b0;
}

.tool.pressed {
    background: #e4e4e4;
    box-shadow: inset 0 0 0 1px #666, inset 1px 1px 2px 1px #bbb;
}

.sep {
    flex: none;
    width: 8px;
    height: 18px;
    background: linear-gradient(#8c8c8c, #8c8c8c) 3px 0 / 1px 100% no-repeat;
}

.combo {
    display: flex;
    align-items: center;
    gap: 2px;
    height: 20px;
    padding: 0 3px;
    margin-right: 3px;
    border: 1px solid #e2e3ea;
    background: #fff;
}

.combo svg {
    flex: none;
    width: 16px;
    height: 16px;
}

.combo.layer {
    width: 300px;
    margin: 0 2px;
    padding: 0 2px 0 1px;
}

.combo.color {
    width: 123px;
    padding-left: 5px;
    gap: 6px;
}

.combo.linetype {
    width: 155px;
    padding-left: 5px;
    gap: 5px;
}

svg.drop {
    flex: none;
    width: 8px;
    height: 4px;
    margin-right: 2px;
}

.combo svg.drop {
    width: 8px;
    height: 4px;
}

.swatch {
    flex: none;
    width: 14px;
    height: 14px;
    border: 1px solid #000;
    background: #fff;
}

.swatch.black {
    margin: 0 5px 0 1px;
    background: #000;
}

.swatch.small {
    width: 13px;
    height: 13px;
}

.sample {
    flex: none;
    width: 54px;
    height: 1px;
    background: #000;
}

.sample.long {
    width: 68px;
}

/* stroke styles of the icons */

.g {
    fill: none;
    stroke: #15502a;
    stroke-width: 1.5px;
}

.k {
    fill: none;
    stroke: #666;
    stroke-width: 1.5px;
}

.s {
    fill: none;
    stroke: #a09c8a;
    stroke-width: 1.2px;
}

.dot {
    fill: #f00000;
}

.node {
    fill: #ffee00;
    stroke: #6c6400;
}

.node.empty {
    fill: #fff;
}

.bx {
    fill: url(#beige);
    stroke: #15502a;
}

.wx {
    fill: #fff;
    stroke: #15602a;
    stroke-width: 1.2px;
}

/* work area */

.workspace {
    display: flex;
    flex: 1;
    min-height: 0;
    background: #f0f0f0;
}

.side {
    display: flex;
    flex-direction: column;
    flex: none;
    width: 29px;
    background: #f0f0f0;
}

.side.right {
    width: 30px;
    margin-left: 2px;
    border-left: 1px solid #fff;
    border-right: 1px solid #999;
}

.dock {
    display: flex;
    flex-direction: column;
    align-items: center;
    padding: 5px 0 6px;
    border-top: 1px solid #fff;
    border-bottom: 1px solid #999;
}

.side .grip {
    width: 21px;
    height: 3px;
    margin: 0 0 5px;
    background: repeating-linear-gradient(90deg, #b8b8b8 0 2px, #f0f0f0 2px 5px);
}

.side .sep {
    width: 20px;
    height: 8px;
    background: linear-gradient(#8c8c8c, #8c8c8c) 0 2px / 100% 1px no-repeat;
}

.dock-rest {
    flex: 1;
    margin: 1px;
    background: linear-gradient(#d0d6ea 60%, #e0e6f6);
}

.tool.letter {
    justify-content: center;
    font: bold 19px "Open Sans", sans-serif;
    color: #15602a;
}

.tool.lined {
    padding-bottom: 4px;
    font-size: 16px;
    line-height: 16px;
    background: linear-gradient(#15602a, #15602a) 4px 17px / 15px 1px no-repeat, linear-gradient(#15602a, #15602a) 8px 19px / 11px 1px no-repeat;
}

.tool.abc {
    flex-direction: column;
    font: bold 7px/8px Roboto, sans-serif;
}

.tool.abc svg {
    height: 8px;
}

.center {
    display: flex;
    flex-direction: column;
    flex: 1;
    min-width: 0;
}

.canvas {
    position: relative;
    flex: 1;
    border-top: 1px solid #555;
    border-left: 2px solid #808080;
    background: #fff;
    overflow: hidden;
}

.crosshair {
    position: absolute;
    top: 0;
    left: 348px;
}

.ucs {
    position: absolute;
    right: 2px;
    bottom: 64px;
    font: 300 15px Lato, sans-serif;
}

.tabs {
    display: flex;
    height: 18px;
    flex: none;
    border-left: 2px solid #808080;
    border-bottom: 1px solid #fff;
}

.nav {
    display: flex;
    align-items: center;
    justify-content: center;
    width: 17px;
    border-right: 2px solid #a0a0a0;
    border-bottom: 1px solid #a0a0a0;
}

.nav svg {
    width: 9px;
    height: 9px;
}

.slant {
    width: 9px;
    height: 17px;
    fill: none;
    stroke: #000;
}

.slant .paper {
    fill: #fff;
    stroke: none;
}

.tab {
    padding: 0 5px;
    border-top: 1px solid #000;
    border-bottom: 1px solid #999;
}

.tab.active {
    padding: 0 2px;
    border-top-color: #fff;
    background: #fff;
    font-weight: bold;
}

.tab-rest {
    flex: 1;
    border-top: 1px solid #000;
}

.command {
    display: flex;
    height: 75px;
    flex: none;
    margin-top: 4px;
    padding: 5px 7px 8px 4px;
    border-top: 1px solid #999;
}

.command-side {
    display: flex;
    flex-direction: column;
    gap: 4px;
    width: 14px;
}

.mini-close {
    display: flex;
    align-items: center;
    justify-content: center;
    flex: none;
    width: 12px;
    height: 12px;
    border: 1px solid;
    border-color: #fff #777 #777 #fff;
}

.mini-close svg {
    width: 7px;
    height: 7px;
}

.vgrip {
    flex: 1;
    width: 7px;
    margin-left: 2px;
    border: solid #aaa;
    border-width: 0 1px;
    box-shadow: inset 1px 0 #fff, inset -2px 0 #fff, inset -3px 0 #aaa;
}

.console {
    display: flex;
    flex-direction: column;
    flex: 1;
    border: 2px solid #77777c;
    border-right: 1px solid #a0a0a8;
    border-bottom: 1px solid #a0a0a8;
    font: 13px/16px "Liberation Mono", monospace;
}

.history {
    display: flex;
    height: 34px;
    flex: none;
    border: 1px solid #fff;
    border-bottom: none;
    background: #eaf0ff;
}

.lines {
    flex: 1;
    padding: 1px 0 0 2px;
}

.scroll {
    display: flex;
    flex-direction: column;
    justify-content: space-between;
    align-items: center;
    width: 16px;
    padding: 6px 0;
    background: #f2f2f2;
    fill: #444;
}

.scroll svg {
    width: 6px;
    height: 3px;
}

.console input {
    flex: 1;
    min-height: 0;
    padding: 0 0 0 3px;
    border-top: 2px solid #a8a8b0;
    background: #f7f7f7;
}

/* properties panel */

.properties {
    display: flex;
    flex-direction: column;
    flex: none;
    width: 250px;
    margin-left: 4px;
    padding: 5px 6px 13px;
    border-left: 1px solid #999;
}

.panel-grip {
    display: flex;
    align-items: center;
    gap: 3px;
}

.hgrip {
    flex: 1;
    height: 7px;
    border: 1px solid #aaa;
    border-left: none;
    box-shadow: inset 0 1px #fff, inset 0 -2px #fff, inset 0 -3px #aaa;
}

.selection {
    display: flex;
    align-items: center;
    justify-content: space-between;
    margin: 6px 6px 11px 3px;
}

.select-wrap {
    display: flex;
    align-items: center;
    width: 199px;
    height: 21px;
    padding: 0 2px;
    border: 1px solid #707070;
    border-radius: 3px;
    background: linear-gradient(#f2f2f2 50%, #dfdfdf 50%, #d0d0d0);
}

.filter {
    width: 23px;
    height: 23px;
    padding: 2px;
    background: linear-gradient(#fafbfe, #dce3f4);
}

.filter svg {
    display: block;
    width: 18px;
    height: 18px;
}

.grid {
    flex: 1;
    margin: 0 6px 0 3px;
    border: 1px solid #a5a5a9;
}

.grid h2 {
    display: flex;
    align-items: center;
    height: 19px;
    padding-left: 4px;
    font-weight: bold;
}

.grid h2 {
    font-size: 12px;
}

.toggle {
    width: 9px;
    height: 9px;
    margin-right: 7px;
    border: 1px solid #000;
    background: linear-gradient(#000, #000) 1px 3px / 5px 1px no-repeat;
}

.grid table {
    width: calc(100% - 17px);
    margin: 0 1px 0 16px;
    border-collapse: collapse;
    table-layout: fixed;
}

.grid th, .grid td {
    height: 18px;
    padding: 0 0 0 3px;
    border: 1px solid #c6c6c6;
    border-right: none;
    font-weight: normal;
    text-align: left;
    white-space: nowrap;
}

.grid th {
    width: 88px;
    padding-left: 2px;
}

.grid td {
    width: auto;
}

.value {
    display: flex;
    align-items: center;
    gap: 5px;
    padding-left: 3px;
}

.value.plain {
    padding-left: 0;
}

.line {
    width: 48px;
    height: 1px;
    background: #000;
}

.line.long {
    width: 60px;
}

/* status bar */

.statusbar {
    display: flex;
    height: 21px;
    flex: none;
    padding: 1px 2px 1px 0;
    border-top: 1px solid #999;
    background: #f0eeee;
}

.message {
    flex: 1;
    padding-left: 2px;
    font: 12px/20px Roboto, sans-serif;
}

.cell {
    padding: 0 3px 0 2px;
    border-left: 1px solid #ccc;
    line-height: 19px;
    white-space: nowrap;
}

.cell.off {
    padding-left: 4px;
    color: #777;
}

.cell.more {
    padding: 0 5px 0 3px;
}

.resize {
    width: 10px;
    height: 10px;
    align-self: flex-end;
}

/* things lying over the window */

.tooltip {
    position: absolute;
    top: 90px;
    left: 417px;
    padding: 0 5px;
    border: 1px solid #767676;
    border-radius: 2px;
    box-shadow: 2px 2px 3px rgba(0, 0, 0, .5);
    background: linear-gradient(#fff, #e6e7f0);
    color: #575757;
    font: 12px/18px Roboto, sans-serif;
}

.pointer {
    position: absolute;
    top: 72px;
    left: 417px;
}

.highlight {
    position: absolute;
    top: 23px;
    left: 338px;
    width: 223px;
    height: 136px;
    border: 2px solid #c00000;
    filter: drop-shadow(3px 4px 3px rgba(0, 0, 0, .5));
    pointer-events: none;
}
```
